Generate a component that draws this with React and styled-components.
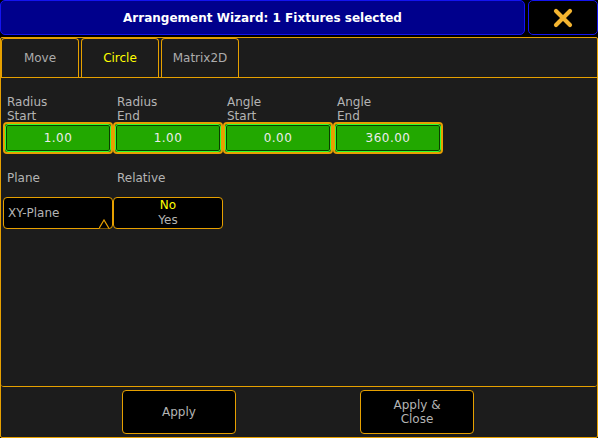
import React from "react";
import styled, { createGlobalStyle } from "styled-components";

const GlobalStyle = createGlobalStyle`
  html, body {
    margin: 0;
    padding: 0;
    background: #000;
  }
  body {
    font-family: "DejaVu Sans", "Liberation Sans", sans-serif;
    font-size: 12px;
  }
`;

const Screen = styled.div`
  width: 598px;
  height: 438px;
  display: flex;
  flex-direction: column;
  background: #000;
  overflow: hidden;
`;

const Header = styled.div`
  display: flex;
  height: 35px;
  gap: 3px;
`;

const TitleBar = styled.div`
  flex: 1;
  display: flex;
  align-items: center;
  justify-content: center;
  background: #00008c;
  border: 1px solid #1414f0;
  border-radius: 5px;
  color: #fff;
  font-weight: bold;
  font-size: 12px;
`;

const CloseButton = styled.button`
  width: 70px;
  padding: 0;
  display: flex;
  align-items: center;
  justify-content: center;
  background: #000;
  border: 1px solid #1414f0;
  border-radius: 5px;
  cursor: pointer;
`;

const Window = styled.div`
  flex: 1;
  margin-top: 2px;
  display: flex;
  flex-direction: column;
  background: #1c1c1c;
  border: 1px solid #e6a000;
  border-radius: 2px;
`;

const TabRow = styled.div`
  display: flex;
  gap: 2px;
  height: 39px;
`;

const Tab = styled.div`
  width: 76px;
  display: flex;
  align-items: center;
  justify-content: center;
  border: 1px solid #e6a000;
  border-bottom: none;
  border-radius: 4px 4px 0 0;
  color: ${(p) => (p.$active ? "#ffff00" : "#acacac")};
`;

const Content = styled.div`
  flex: 1;
  padding: 17px 0 0 2px;
  border-top: 1px solid #e6a000;
  border-bottom: 1px solid #e6a000;
  border-radius: 0 0 3px 3px;
  display: flex;
  flex-direction: column;
`;

const Grid = styled.div`
  display: grid;
  grid-template-columns: repeat(4, 110px);
  margin-top: ${(p) => p.$top || 0}px;
`;

const Cell = styled.div`
  display: flex;
  flex-direction: column;
`;

const Label = styled.div`
  height: ${(p) => p.$h}px;
  padding-left: 4px;
  color: #b4b4b4;
  line-height: 14px;
`;

const GreenField = styled.div`
  height: 32px;
  box-sizing: border-box;
  border: 2px solid #e6a000;
  border-radius: 4px;
  display: flex;
`;

const GreenInner = styled.div`
  flex: 1;
  display: flex;
  align-items: center;
  justify-content: center;
  background: #22a800;
  border: 1px solid #30ff30;
  border-radius: 3px;
  box-shadow: inset 0 0 0 1px #0b3d00;
  color: #ececec;
  letter-spacing: 0.5px;
`;

const Box = styled.div`
  position: relative;
  height: 32px;
  box-sizing: border-box;
  background: #000;
  border: 1px solid #e6a000;
  border-radius: 4px;
  display: flex;
  flex-direction: column;
  justify-content: center;
  align-items: ${(p) => (p.$center ? "center" : "flex-start")};
  padding-left: ${(p) => (p.$center ? 0 : 4)}px;
  line-height: 15px;
  color: #b4b4b4;
`;

const Caret = styled.svg`
  position: absolute;
  right: 3px;
  bottom: -1px;
`;

const Selected = styled.span`
  color: #ffff00;
`;

const Footer = styled.div`
  height: 50px;
  box-sizing: border-box;
  padding: 3px 0 0 121px;
  display: flex;
  gap: 124px;
`;

const ActionButton = styled.button`
  width: 114px;
  height: 44px;
  padding: 0;
  background: #000;
  border: 1px solid #e6a000;
  border-radius: 4px;
  color: #b4b4b4;
  font-family: inherit;
  font-size: 12px;
  line-height: 14px;
  cursor: pointer;
`;

const fields = [
  { top: "Radius", bottom: "Start", value: "1.00" },
  { top: "Radius", bottom: "End", value: "1.00" },
  { top: "Angle", bottom: "Start", value: "0.00" },
  { top: "Angle", bottom: "End", value: "360.00" },
];

export default function App() {
  return (
    <Screen>
      <GlobalStyle />
      <Header>
        <TitleBar>Arrangement Wizard: 1 Fixtures selected</TitleBar>
        <CloseButton>
          <svg width="20" height="20" viewBox="0 0 20 20">
            <path
              d="M3 3 L17 17 M17 3 L3 17"
              stroke="#f5b530"
              strokeWidth="4.2"
              strokeLinecap="round"
            />
          </svg>
        </CloseButton>
      </Header>
      <Window>
        <TabRow>
          <Tab>Move</Tab>
          <Tab $active>Circle</Tab>
          <Tab>Matrix2D</Tab>
        </TabRow>
        <Content>
          <Grid>
            {fields.map((f, i) => (
              <Cell key={i}>
                <Label $h={27}>
                  {f.top}
                  <br />
                  {f.bottom}
                </Label>
                <GreenField>
                  <GreenInner>{f.value}</GreenInner>
                </GreenField>
              </Cell>
            ))}
          </Grid>
          <Grid $top={17}>
            <Cell>
              <Label $h={26}>Plane</Label>
              <Box>
                XY-Plane
                <Caret width="10" height="10" viewBox="0 0 10 10">
                  <path d="M0 9.5 L5 1 L10 9.5" stroke="#e6a000" strokeWidth="1.2" fill="#000" />
                </Caret>
              </Box>
            </Cell>
            <Cell>
              <Label $h={26}>Relative</Label>
              <Box $center>
                <Selected>No</Selected>
                <span>Yes</span>
              </Box>
            </Cell>
          </Grid>
        </Content>
        <Footer>
          <ActionButton>Apply</ActionButton>
          <ActionButton>
            Apply &amp;
            <br />
            Close
          </ActionButton>
        </Footer>
      </Window>
    </Screen>
  );
}
